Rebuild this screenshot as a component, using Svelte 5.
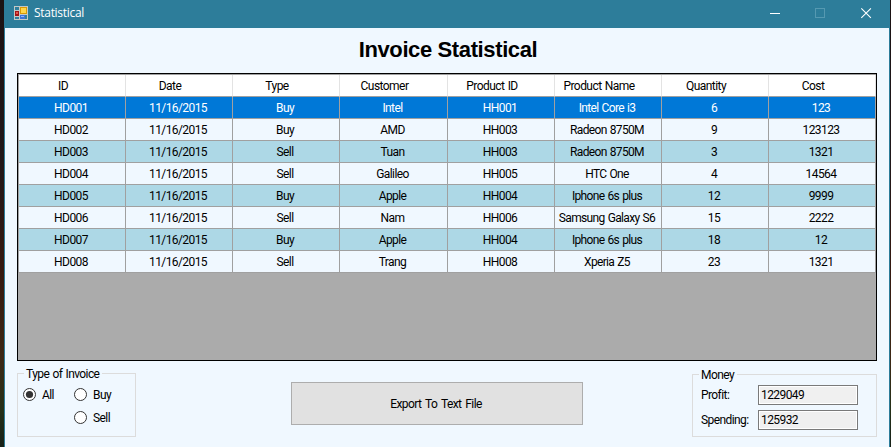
<script>
  const columns = ['ID', 'Date', 'Type', 'Customer', 'Product ID', 'Product Name', 'Quantity', 'Cost'];
  const rows = [
    ['HD001', '11/16/2015', 'Buy', 'Intel', 'HH001', 'Intel Core i3', '6', '123'],
    ['HD002', '11/16/2015', 'Buy', 'AMD', 'HH003', 'Radeon 8750M', '9', '123123'],
    ['HD003', '11/16/2015', 'Sell', 'Tuan', 'HH003', 'Radeon 8750M', '3', '1321'],
    ['HD004', '11/16/2015', 'Sell', 'Galileo', 'HH005', 'HTC One', '4', '14564'],
    ['HD005', '11/16/2015', 'Buy', 'Apple', 'HH004', 'Iphone 6s plus', '12', '9999'],
    ['HD006', '11/16/2015', 'Sell', 'Nam', 'HH006', 'Samsung Galaxy S6', '15', '2222'],
    ['HD007', '11/16/2015', 'Buy', 'Apple', 'HH004', 'Iphone 6s plus', '18', '12'],
    ['HD008', '11/16/2015', 'Sell', 'Trang', 'HH008', 'Xperia Z5', '23', '1321']
  ];
  let selected = $state(0);
  let kind = $state('All');
</script>

<div class="desktop">
  <div class="window">
    <header>
      <svg class="app" width="14" height="14" viewBox="0 0 14 14" shape-rendering="crispEdges">
        <rect width="14" height="14" fill="#c3c8c6" />
        <path d="M1 1h4v3H1zM1 11h4v2H1zM6 9h7v4H6z" fill="#2f7f9d" />
        <rect x="1" y="5" width="4" height="5" fill="#a31515" />
        <rect x="2" y="6" width="2" height="2" fill="#e2574c" />
        <rect x="6" y="1" width="7" height="7" fill="#d99a06" />
        <rect x="7" y="2" width="5" height="5" fill="#ffd64a" />
        <rect x="6" y="9" width="5" height="4" fill="#3f73d8" />
        <rect x="7" y="10" width="3" height="1" fill="#8fb5ff" />
      </svg>
      <span class="caption">Statistical</span>
      <svg class="controls" width="104" height="12" viewBox="0 0 104 12" fill="none">
        <path d="M0 6.5h10" stroke="#fff" />
        <rect x="45.5" y="1.5" width="9" height="9" stroke="#5599b1" />
        <path d="M91.3 1.3l9.6 9.6M100.9 1.3l-9.6 9.6" stroke="#fff" stroke-width="1.1" />
      </svg>
    </header>

    <main>
      <h1>Invoice Statistical</h1>

      <div class="grid">
        <div class="row head">
          {#each columns as name}<div class="cell"><span>{name}</span></div>{/each}
        </div>
        {#each rows as row, i}
          <div class="row" class:odd={i % 2 === 1} class:selected={i === selected} onclick={() => (selected = i)} role="presentation">
            {#each row as value}<div class="cell"><span>{value}</span></div>{/each}
          </div>
        {/each}
      </div>

      <div class="bottom">
        <section class="group type">
          <span class="legend">Type of Invoice</span>
          <div class="options">
            {#each ['All', 'Buy', 'Sell'] as option}
              <button class="radio {option.toLowerCase()}" onclick={() => (kind = option)}>
                <svg width="13" height="13" viewBox="0 0 13 13">
                  <circle cx="6.5" cy="6.5" r="6" fill="#fff" stroke="#333" />
                  {#if kind === option}<circle cx="6.5" cy="6.5" r="3.6" fill="#333" />{/if}
                </svg>
                <span>{option}</span>
              </button>
            {/each}
          </div>
        </section>

        <button class="export">Export To Text File</button>

        <section class="group money">
          <span class="legend">Money</span>
          <div class="field"><span>Profit:</span><div class="box">1229049</div></div>
          <div class="field"><span>Spending:</span><div class="box">125932</div></div>
        </section>
      </div>
    </main>
  </div>
</div>

<style>
  * { box-sizing: border-box; }
  .desktop {
    width: 891px;
    height: 447px;
    padding: 0 1px 0 4px;
    overflow: hidden;
    background: linear-gradient(#1b1213 0%, #201719 35%, #35180f 60%, #3d2815 80%, #253018 92%, #172018 100%);
    font: 12px/14px Roboto, "Liberation Sans", sans-serif;
    letter-spacing: -0.58px;
    word-spacing: 0.8px;
    color: #000;
  }
  .window {
    height: 447px;
    background: #f0f8ff;
    border: solid #2d7d9a;
    border-width: 0 1px;
  }
  header {
    height: 28px;
    padding: 0 15px 3px 9px;
    display: flex;
    align-items: center;
    background: #2d7d9a;
    color: #fff;
  }
  .caption {
    margin-left: 6px;
    font-family: "Open Sans", sans-serif;
    font-size: 12px;
    letter-spacing: -0.3px;
  }
  .controls { margin-left: auto; }
  main { padding: 0 12px; }
  h1 {
    margin: 0;
    height: 45px;
    padding: 9px 0 0 2px;
    text-align: center;
    font: bold 22px/26px "Liberation Sans", sans-serif;
    letter-spacing: -0.38px;
    word-spacing: 0;
  }
  .grid {
    width: 860px;
    height: 288px;
    border: 1px solid #000;
    background: #ababab;
  }
  .row {
    display: grid;
    grid-template-columns: 108px 107px 107px 108px repeat(4, 107px);
    height: 22px;
    background: #add8e6;
  }
  .row.odd { background: #f0f8ff; }
  .cell {
    display: flex;
    align-items: center;
    justify-content: center;
    padding-right: 2px;
    white-space: nowrap;
    border: solid #a0a0a0;
    border-width: 0 1px 1px 0;
  }
  .cell:first-child { border-left-width: 1px; }
  .cell:nth-child(6) { letter-spacing: -0.66px; }
  .row.head {
    height: 23px;
    background: #fff;
    border-top: 1px solid #a0a0a0;
  }
  .head .cell {
    padding-right: 18px;
    border-right-color: #e3e3e3;
  }
  .head .cell:nth-child(n) { letter-spacing: -0.55px; }
  .row.selected { background: #0078d7; color: #fff; }
  .bottom {
    display: flex;
    align-items: flex-start;
    padding-top: 12px;
  }
  .group { border: 1px solid #dcdcdc; }
  .legend {
    display: block;
    width: max-content;
    background: #f0f8ff;
  }
  .type { width: 119px; height: 64px; }
  .type .legend { margin: -7px 0 0 6px; padding: 0 3px 0 2px; }
  .options {
    display: grid;
    grid-template-columns: 51px 50px;
    row-gap: 9px;
    padding: 7px 0 0 5px;
  }
  .radio {
    display: flex;
    align-items: center;
    gap: 6px;
    height: 14px;
    padding: 0;
    border: 0;
    background: none;
    font: inherit;
    letter-spacing: inherit;
    color: inherit;
  }
  .radio svg { margin-bottom: 1px; }
  .sell { grid-column: 2; }
  .export {
    width: 292px;
    height: 43px;
    margin: 9px 0 0 155px;
    padding: 0 2px 0 0;
    border: 1px solid #adadad;
    background: #e1e1e1;
    font: inherit;
    letter-spacing: inherit;
    word-spacing: 1.5px;
    color: #000;
  }
  .money { width: 185px; height: 63px; margin: 1px 0 0 109px; }
  .money .legend { margin: -7px 0 3px 6px; padding: 0 3px 0 2px; }
  .field {
    display: flex;
    align-items: center;
    height: 20px;
    margin-bottom: 5px;
    padding-left: 8px;
  }
  .field span { width: 57px; }
  .box {
    width: 100px;
    height: 20px;
    padding: 1px 2px;
    border: 1px solid #7a7a7a;
    background: #f0f0f0;
    box-shadow: inset 0 0 0 1px #fff;
    line-height: 16px;
  }
</style>
